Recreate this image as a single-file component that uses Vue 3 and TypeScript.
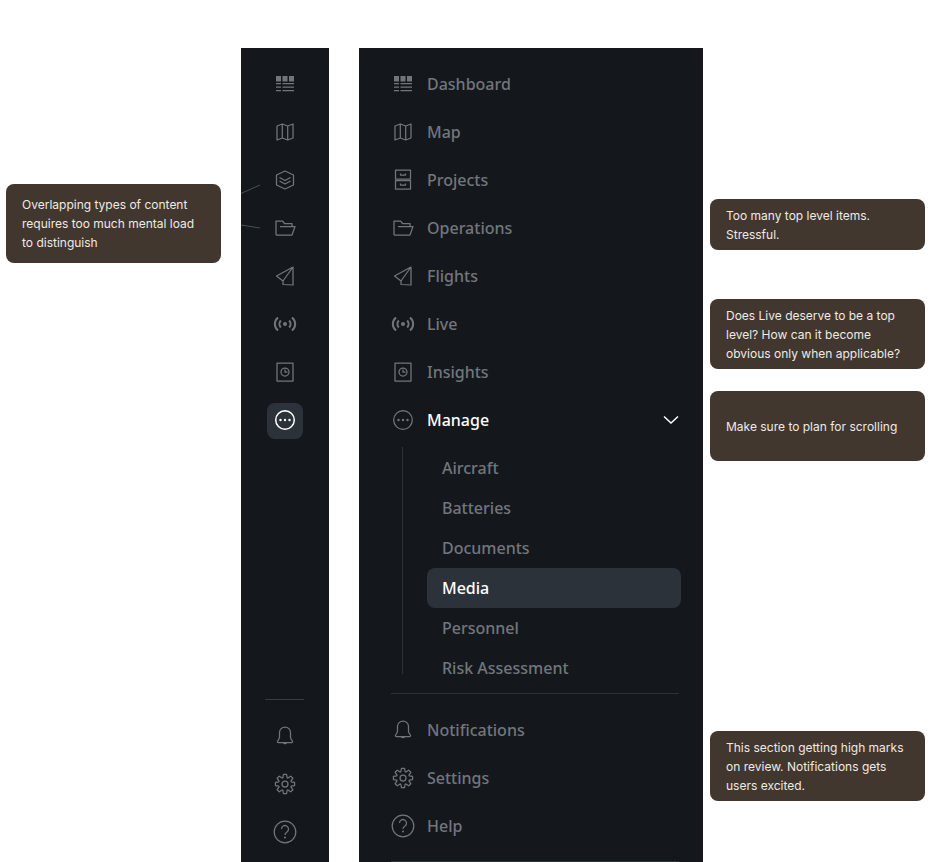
<template>
  <div class="canvas">
    <aside class="rail">
      <ul class="rail-list">
        <li v-for="item in topItems" :key="item.id" class="rail-item">
          <span class="rail-icon" :class="{ active: item.id === 'manage' }">
            <svg class="icon" viewBox="0 0 24 24">
              <path
                v-for="(p, i) in railIcon(item.id)"
                :key="i"
                :d="p.d"
                :class="{ solid: p.solid, bold: p.bold }"
              />
            </svg>
          </span>
        </li>
      </ul>
      <div class="rail-rule"></div>
      <ul class="rail-list">
        <li v-for="item in bottomItems" :key="item.id" class="rail-item">
          <span class="rail-icon">
            <svg class="icon" viewBox="0 0 24 24">
              <path
                v-for="(p, i) in icons[item.id]"
                :key="i"
                :d="p.d"
                :class="{ solid: p.solid, bold: p.bold }"
              />
            </svg>
          </span>
        </li>
      </ul>
    </aside>

    <nav class="panel">
      <ul class="nav-list">
        <li
          v-for="item in topItems"
          :key="item.id"
          class="nav-item"
          :class="{ open: item.id === 'manage' }"
        >
          <svg class="icon" viewBox="0 0 24 24">
            <path
              v-for="(p, i) in icons[item.id]"
              :key="i"
              :d="p.d"
              :class="{ solid: p.solid, bold: p.bold }"
            />
          </svg>
          <span class="nav-label">{{ item.label }}</span>
          <svg v-if="item.id === 'manage'" class="chevron" viewBox="0 0 16 10">
            <path d="M1 1.500l7 6.500 7-6.500" />
          </svg>
        </li>
      </ul>

      <ul class="sub-list">
        <li
          v-for="name in subItems"
          :key="name"
          class="sub-item"
          :class="{ current: name === 'Media' }"
        >
          {{ name }}
        </li>
      </ul>

      <div class="panel-rule"></div>

      <ul class="nav-list">
        <li v-for="item in bottomItems" :key="item.id" class="nav-item">
          <svg class="icon" viewBox="0 0 24 24">
            <path
              v-for="(p, i) in icons[item.id]"
              :key="i"
              :d="p.d"
              :class="{ solid: p.solid, bold: p.bold }"
            />
          </svg>
          <span class="nav-label">{{ item.label }}</span>
        </li>
      </ul>

      <div class="panel-rule last"></div>
    </nav>

    <!-- review notes sit on top of the canvas -->
    <svg class="leaders" width="936" height="862">
      <path d="M241 193.500L260 185M241 225L260 228" />
    </svg>
    <p
      v-for="note in notes"
      :key="note.text"
      class="note"
      :style="{ left: note.x + 'px', top: note.y + 'px', height: note.h + 'px' }"
    >
      {{ note.text }}
    </p>
  </div>
</template>

<script setup lang="ts">
interface IconPath {
  d: string
  solid?: boolean
  bold?: boolean
}

interface NavItem {
  id: string
  label: string
}

// 8 tooth gear outline, drawn around 12,12
function gearPath(): string {
  const points: string[] = []
  const teeth = 8
  for (let i = 0; i < teeth; i++) {
    const a = (i / teeth) * Math.PI * 2 - Math.PI / 2
    const step = (Math.PI * 2) / teeth
    const corners: [number, number][] = [
      [-0.42, 6.6],
      [-0.2, 9.7],
      [0.2, 9.7],
      [0.42, 6.6]
    ]
    corners.forEach(([off, r]) => {
      const t = a + off * step
      const x = (12 + Math.cos(t) * r).toFixed(2)
      const y = (12 + Math.sin(t) * r).toFixed(2)
      points.push(`${points.length ? 'L' : 'M'}${x} ${y}`)
    })
  }
  return points.join('') + 'Z'
}

const topItems: NavItem[] = [
  { id: 'dashboard', label: 'Dashboard' },
  { id: 'map', label: 'Map' },
  { id: 'projects', label: 'Projects' },
  { id: 'operations', label: 'Operations' },
  { id: 'flights', label: 'Flights' },
  { id: 'live', label: 'Live' },
  { id: 'insights', label: 'Insights' },
  { id: 'manage', label: 'Manage' }
]

const bottomItems: NavItem[] = [
  { id: 'notifications', label: 'Notifications' },
  { id: 'settings', label: 'Settings' },
  { id: 'help', label: 'Help' }
]

const subItems = ['Aircraft', 'Batteries', 'Documents', 'Media', 'Personnel', 'Risk Assessment']

const icons: Record<string, IconPath[]> = {
  dashboard: [
    { d: 'M3 4h5v5.500H3zM9.500 4h5v5.500h-5zM16 4h5v5.500h-5z', solid: true },
    { d: 'M3 11.500h5M9.500 11.500H21M3 15h5M9.500 15H21M3 18.500h5M9.500 18.500H21' }
  ],
  map: [{ d: 'M4 6l5.300-2 5.400 2L20 4v14l-5.300 2-5.400-2L4 20zM9.300 4v14M14.700 6v14' }],
  projects: [
    {
      d: 'M4.500 2h15v9h-15zM4.500 12.500h15v8.500h-15zM9.500 5.500v1.500h5V5.500M9.500 15.500V17h5v-1.500'
    }
  ],
  operations: [{ d: 'M3 19V5h6.500l2 2.500H19V11M3 19h16l3-8.500H7' }],
  flights: [{ d: 'M20 3L3.500 12 10 17v3.500L20 21zM20 3L10 17' }],
  live: [
    { d: 'M12 10a2 2 0 1 0 0 4 2 2 0 0 0 0-4z', solid: true },
    {
      d: 'M7.800 8.500c-1.800 2-1.800 5 0 7M16.200 8.500c1.800 2 1.800 5 0 7M5 5.500c-4.200 3.700-4.200 9.300 0 13M19 5.500c4.200 3.700 4.200 9.300 0 13',
      bold: true
    }
  ],
  insights: [{ d: 'M4 3h16v18H4zM12 8a4 4 0 1 0 0 8 4 4 0 0 0 0-8zM12 9.500V12h2.500' }],
  manage: [
    { d: 'M12 2.700a9.300 9.300 0 1 0 0 18.600 9.300 9.300 0 0 0 0-18.600z' },
    {
      d: 'M7.500 10.800a1.200 1.200 0 1 0 0 2.400 1.200 1.200 0 0 0 0-2.400zM12 10.800a1.200 1.200 0 1 0 0 2.400 1.200 1.200 0 0 0 0-2.400zM16.500 10.800a1.200 1.200 0 1 0 0 2.400 1.200 1.200 0 0 0 0-2.400z',
      solid: true
    }
  ],
  notifications: [
    {
      d: 'M12 3a5.500 5.500 0 0 0-5.500 5.500v4.500c0 2-.9 3-2 4.300-.3.500 0 1.200.6 1.200h13.800c.6 0 .9-.7.600-1.200-1.100-1.300-2-2.300-2-4.300V8.500A5.500 5.500 0 0 0 12 3zM10.300 18.500a1.800 1.800 0 0 0 3.400 0'
    }
  ],
  settings: [{ d: gearPath() + 'M12 9a3 3 0 1 0 0 6 3 3 0 0 0 0-6z' }],
  help: [
    {
      d: 'M12 1.200a10.800 10.800 0 1 0 0 21.600 10.800 10.800 0 0 0 0-21.600zM8.500 9a3.500 3.500 0 1 1 5.500 2.900c-1.300.9-2 1.600-2 3.100'
    },
    { d: 'M12 16.500a1 1 0 1 0 0 2 1 1 0 0 0 0-2z', solid: true }
  ]
}

// the rail shows a different glyph for projects (stacked layers)
const stackIcon: IconPath[] = [
  { d: 'M12 3l8.500 4v10L12 21l-8.500-4V7zM6.500 9.500l5.500 3 5.500-3M6.500 13l5.500 3 5.500-3' }
]

function railIcon(id: string): IconPath[] {
  return id === 'projects' ? stackIcon : icons[id]
}

const notes = [
  {
    x: 6,
    y: 184,
    h: 79,
    text: 'Overlapping types of content requires too much mental load to distinguish'
  },
  { x: 710, y: 199, h: 51, text: 'Too many top level items. Stressful.' },
  {
    x: 710,
    y: 299,
    h: 70,
    text: 'Does Live deserve to be a top level? How can it become obvious only when applicable?'
  },
  { x: 710, y: 391, h: 70, text: 'Make sure to plan for scrolling' },
  {
    x: 710,
    y: 731,
    h: 70,
    text: 'This section getting high marks on review. Notifications gets users excited.'
  }
]
</script>

<style>
html,
body {
  background: #fff;
  overflow: hidden;
}
</style>

<style scoped>
.canvas {
  position: relative;
  display: flex;
  gap: 30px;
  width: 936px;
  height: 862px;
  padding: 48px 0 0 241px;
  box-sizing: border-box;
  overflow: hidden;
  background: #fff;
}

ul {
  list-style: none;
  margin: 0;
  padding: 0;
}

.rail {
  width: 88px;
  flex: none;
  padding-top: 12px;
  background: #14181c;
}

.rail-item {
  display: flex;
  align-items: center;
  justify-content: center;
  height: 48px;
}

.rail-icon {
  display: flex;
  align-items: center;
  justify-content: center;
  width: 36px;
  height: 36px;
  border-radius: 8px;
}

.rail-icon.active {
  align-self: flex-end;
  margin-bottom: 5px;
  padding-bottom: 2px;
  box-sizing: border-box;
  background: #2b323a;
  color: #fff;
}

.rail-rule {
  width: 39px;
  height: 1px;
  margin: 255px 0 12px 24px;
  background: #363d45;
}

.icon {
  flex: none;
  width: 24px;
  height: 24px;
  color: #71767d;
}

.active .icon {
  color: #fff;
}

.icon path {
  fill: none;
  stroke: currentColor;
  stroke-width: 1.25;
  stroke-linejoin: round;
}

.active .icon path {
  stroke-width: 1.5;
}

.icon path.bold {
  stroke-width: 2;
}

.icon path.solid {
  fill: currentColor;
  stroke: none;
}

.panel {
  width: 344px;
  flex: none;
  padding-top: 12px;
  box-sizing: border-box;
  background: #14181c;
  font-family: "Noto Sans", sans-serif;
  font-size: 16px;
  font-weight: 500;
  color: #71767d;
}

.nav-item {
  display: flex;
  align-items: center;
  gap: 12px;
  height: 48px;
  padding: 0 24px 0 32px;
}

.nav-label {
  flex: 1;
}

.nav-item.open .nav-label {
  color: #fff;
}

.chevron {
  width: 16px;
  height: 10px;
}

.chevron path {
  fill: none;
  stroke: #fff;
  stroke-width: 1.5;
}

.sub-list {
  margin: 3px 22px 0 43px;
  padding: 1px 0 0 24px;
  border-left: 1px solid #2b323a;
  height: 226px;
}

.sub-item {
  display: flex;
  align-items: center;
  height: 40px;
  padding-left: 15px;
  border-radius: 8px;
}

.sub-item.current {
  background: #2b323a;
  color: #fff;
}

.panel-rule {
  height: 1px;
  margin: 19px 24px 12px 32px;
  background: #2b323a;
}

.panel-rule.last {
  margin-top: 11px;
}

.leaders {
  position: absolute;
  left: 0;
  top: 0;
  pointer-events: none;
}

.leaders path {
  fill: none;
  stroke: #4a4f55;
  stroke-width: 1;
}

.note {
  position: absolute;
  display: flex;
  align-items: center;
  width: 215px;
  margin: 0;
  padding: 0 16px;
  box-sizing: border-box;
  border-radius: 8px;
  background: #41372e;
  color: #efeae5;
  font-family: Inter, sans-serif;
  font-size: 12px;
  line-height: 19px;
}
</style>
